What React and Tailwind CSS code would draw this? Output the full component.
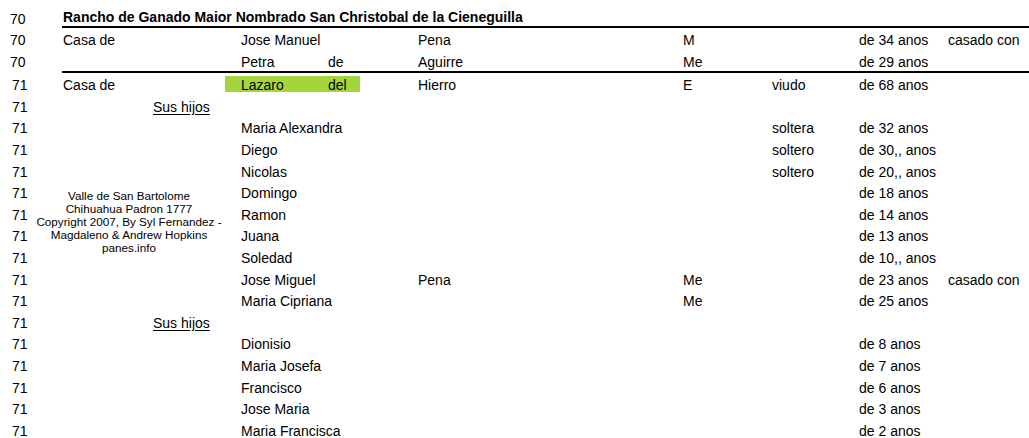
import React from "react"

const cols = "grid grid-cols-[62px_90px_88px_87px_90px_265px_89px_87px_89px_1fr]"

const rows = [
  { n: "70", a: "Casa de", name: "Jose Manuel", sur: "Pena", g: "M", age: "de 34 anos", note: "casado con" },
  { n: "70", name: "Petra", de: "de", sur: "Aguirre", g: "Me", age: "de 29 anos", line: true },
  { n: "71", a: "Casa de", name: "Lazaro", de: "del", sur: "Hierro", g: "E", st: "viudo", age: "de 68 anos", hl: true },
  { n: "71", hijos: true },
  { n: "71", name: "Maria Alexandra", st: "soltera", age: "de 32 anos" },
  { n: "71", name: "Diego", st: "soltero", age: "de 30,, anos" },
  { n: "71", name: "Nicolas", st: "soltero", age: "de 20,, anos" },
  { n: "71", name: "Domingo", age: "de 18 anos" },
  { n: "71", name: "Ramon", age: "de 14 anos" },
  { n: "71", name: "Juana", age: "de 13 anos" },
  { n: "71", name: "Soledad", age: "de 10,, anos" },
  { n: "71", name: "Jose Miguel", sur: "Pena", g: "Me", age: "de 23 anos", note: "casado con" },
  { n: "71", name: "Maria Cipriana", g: "Me", age: "de 25 anos" },
  { n: "71", hijos: true },
  { n: "71", name: "Dionisio", age: "de 8 anos" },
  { n: "71", name: "Maria Josefa", age: "de 7 anos" },
  { n: "71", name: "Francisco", age: "de 6 anos" },
  { n: "71", name: "Jose Maria", age: "de 3 anos" },
  { n: "71", name: "Maria Francisca", age: "de 2 anos" },
]

const cell = "relative pl-px whitespace-nowrap"

const Row = ({ r }) => (
  <div className={`${cols} relative h-[21.6px] pt-[4px] leading-[17.6px]`}>
    {/* cell fill behind Lazaro del */}
    {r.hl && <span className="absolute left-[225px] top-[3px] w-[135px] h-[16px] bg-[#a4d63b]" />}
    <div className={`relative ${r.n === "70" ? "pl-[10px]" : "pl-[12px]"}`}>{r.n}</div>
    <div className={cell}>{r.a}</div>
    <div className={cell}>{r.hijos && <span className="underline underline-offset-2">Sus hijos</span>}</div>
    <div className={cell}>{r.name}</div>
    <div className={cell}>{r.de}</div>
    <div className={cell}>{r.sur}</div>
    <div className={cell}>{r.g}</div>
    <div className={cell}>{r.st}</div>
    <div className={cell}>{r.age}</div>
    <div className={cell}>{r.note}</div>
  </div>
)

export default function App() {
  return (
    <div className="relative w-[1029px] h-[438px] overflow-hidden bg-white text-black text-[14px] font-['Liberation_Sans',Arial,sans-serif] pt-[6px]">
      {/* title */}
      <div className="flex">
        <div className="w-[62px] pl-[10px] pt-[5px] leading-[17px]">70</div>
        <div className="flex-1 pl-px pt-[3px] leading-[17px] font-bold border-b-2 border-black">
          Rancho de Ganado Maior Nombrado San Christobal de la Cieneguilla
        </div>
      </div>

      {rows.map((r, i) => (
        <React.Fragment key={i}>
          <Row r={r} />
          {r.line && <div className="ml-[62px] h-[2px] bg-black" />}
        </React.Fragment>
      ))}

      {/* text box over the sheet */}
      <div className="absolute left-[29px] top-[189px] w-[200px] text-center text-[11.7px] leading-[13px]">
        <div>Valle de San Bartolome</div>
        <div>Chihuahua Padron 1777</div>
        <div>Copyright 2007, By Syl Fernandez -</div>
        <div>Magdaleno &amp; Andrew Hopkins</div>
        <div>panes.info</div>
      </div>
    </div>
  )
}
